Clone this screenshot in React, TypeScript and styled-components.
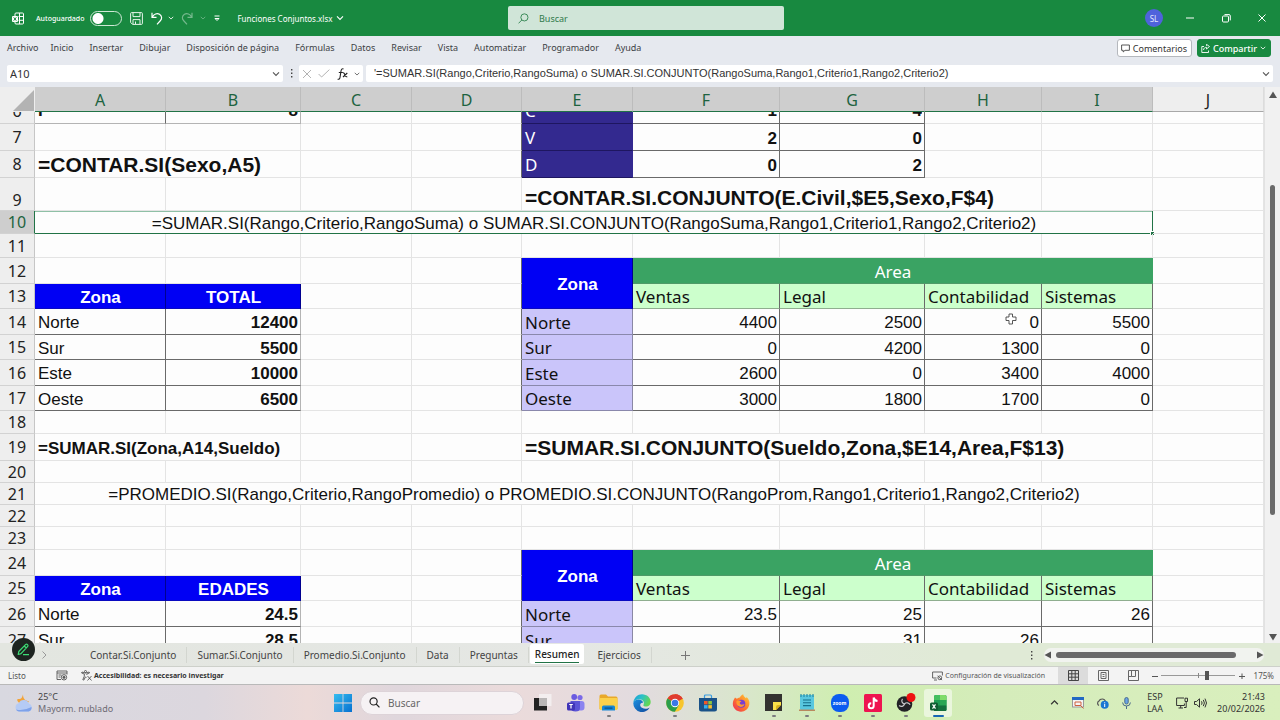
import React from "react";
import styled, { createGlobalStyle, css } from "styled-components";

const UI = `"Noto Sans", "Open Sans", sans-serif`;
const ARIAL = `"Liberation Sans", Arial, sans-serif`;

const Global = createGlobalStyle`
  * { box-sizing: border-box; }
  body { margin: 0; font-family: ${UI}; color: #222; }
  button, input { font: inherit; color: inherit; border: 0; background: none; padding: 0; margin: 0; }
  svg { display: block; flex: none; }
`;

const Window = styled.div`
  display: flex;
  flex-direction: column;
  height: 100vh;
  overflow: hidden;
  background: #e6e9ef;
`;

/* ---------- title bar ---------- */

const TitleBar = styled.header`
  display: grid;
  grid-template-columns: 1fr minmax(160px, 276px) 1fr;
  align-items: center;
  height: 36px;
  padding-left: 12px;
  flex: none;
  background: #188940;
  color: #fff;
  font-size: 8px;
`;

const TitleGroup = styled.div`
  display: flex;
  align-items: center;
  white-space: nowrap;
`;

const AutoSave = styled.label`
  display: flex;
  align-items: center;
  gap: 6px;
  margin: 0 8px 0 12px;
  font-size: 7px;
  font-weight: 500;
`;

const Toggle = styled.input`
  appearance: none;
  width: 32px;
  height: 15px;
  border: 1px solid #cfe8d6;
  border-radius: 8px;
  background: radial-gradient(circle at 7px 50%, #fff 5px, transparent 6px);
`;

const BarButton = styled.button<{ $w: number; $dim?: boolean }>`
  display: flex;
  align-items: center;
  justify-content: center;
  width: ${(p) => p.$w}px;
  height: 24px;
  opacity: ${(p) => (p.$dim ? 0.4 : 1)};
`;

const FileName = styled.button`
  display: flex;
  align-items: center;
  gap: 4px;
  margin-left: 6px;
`;

const TitleSearch = styled.label`
  display: flex;
  align-items: center;
  gap: 10px;
  height: 24px;
  padding: 0 10px;
  border-radius: 2px;
  background: #d0e5d8;
  color: #1f7a41;
`;

const SearchInput = styled.input<{ $size: number; $tint: string }>`
  flex: 1;
  min-width: 0;
  font-size: ${(p) => p.$size}px;
  outline: none;
  &::placeholder { color: ${(p) => p.$tint}; opacity: 1; }
`;

const WindowControls = styled(TitleGroup)`
  justify-content: flex-end;
`;

const Avatar = styled.button`
  width: 18px;
  height: 18px;
  margin-right: 9px;
  border-radius: 50%;
  background: #4f62dc;
  color: #e4e8ff;
  font-size: 8px;
`;

/* ---------- ribbon tabs ---------- */

const Ribbon = styled.nav`
  display: flex;
  align-items: center;
  justify-content: space-between;
  flex: none;
  height: 24px;
  padding: 0 9px 0 7px;
  margin-bottom: 4px;
`;

const RibbonTabs = styled.div`
  display: flex;
  gap: 16px;
`;

const RibbonTab = styled.button<{ $first?: boolean }>`
  font-size: 9px;
  line-height: 14px;
  color: #3c3f44;
  white-space: nowrap;
  margin-right: ${(p) => (p.$first ? "-4px" : "0")};
`;

const RibbonActions = styled.div`
  display: flex;
  gap: 5px;
`;

const ActionButton = styled.button<{ $primary?: boolean }>`
  display: flex;
  align-items: center;
  gap: 3px;
  height: 18px;
  padding: 0 4px 0 3px;
  border-radius: 3px;
  border: 1px solid ${(p) => (p.$primary ? "#188940" : "#b5b8bd")};
  background: ${(p) => (p.$primary ? "#188940" : "#fff")};
  color: ${(p) => (p.$primary ? "#fff" : "#333")};
  font-size: 9px;
  font-weight: ${(p) => (p.$primary ? 500 : 400)};
`;

/* ---------- formula bar ---------- */

const FormulaBar = styled.div`
  display: flex;
  align-items: center;
  flex: none;
  height: 23px;
  padding: 0 7px 4px;
  gap: 3px;
`;

const Box = styled.div<{ $w?: string }>`
  display: flex;
  align-items: center;
  justify-content: space-between;
  height: 17px;
  width: ${(p) => p.$w ?? "auto"};
  flex: ${(p) => (p.$w ? "none" : "1")};
  padding: 0 3px;
  background: #fff;
  border-radius: 2px;
  color: #555;
`;

const NameInput = styled.input`
  width: 100px;
  font-size: 11px;
  line-height: 15px;
  color: #333;
`;

const FormulaInput = styled.input`
  flex: 1;
  padding-left: 5px;
  font-family: ${ARIAL};
  font-size: 11px;
  line-height: 15px;
  color: #333;
`;

const Dots = styled.div<{ $after?: number }>`
  display: flex;
  justify-content: center;
  width: 10px;
  margin-right: ${(p) => p.$after ?? 0}px;
`;

/* ---------- sheet ---------- */

const SheetArea = styled.main`
  display: flex;
  flex: 1;
  min-height: 0;
  background: #fdfdfd;
`;

const Viewport = styled.div`
  flex: 1;
  min-width: 0;
  overflow: hidden;
`;

const Grid = styled.table`
  width: 100%;
  table-layout: fixed;
  border-collapse: separate;
  border-spacing: 0;
  font-size: 17px;
  line-height: 19px;
`;

const Col = styled.col<{ $w?: number }>`
  width: ${(p) => (p.$w ? `${p.$w}px` : "auto")};
`;

const ColumnHead = styled.th<{ $on: boolean }>`
  height: 25px;
  padding: 3px 0 0;
  font-size: 16px;
  font-weight: 400;
  background: ${(p) => (p.$on ? "#cecece" : "#eeeeee")};
  color: ${(p) => (p.$on ? "#1d6340" : "#222")};
  border-right: 1px solid ${(p) => (p.$on ? "#bcbcbc" : "#dcdcdc")};
  border-bottom: 1px solid ${(p) => (p.$on ? "#217346" : "#a8a8a8")};
`;

const Corner = styled.td`
  padding: 0 1px 1px 0;
  background: #eeeeee;
  vertical-align: bottom;
  svg { margin-left: auto; }
`;

const RowHead = styled.th<{ $on?: boolean; $low?: boolean; $cut?: boolean }>`
  padding: ${(p) => (p.$cut ? 0 : 1)}px 0 0;
  font-size: 16px;
  font-weight: 400;
  vertical-align: ${(p) => (p.$low ? "bottom" : "middle")};
  background: ${(p) => (p.$on ? "#cecece" : "#eeeeee")};
  color: ${(p) => (p.$on ? "#1d6340" : "#222")};
  border-right: 1px solid ${(p) => (p.$on ? "#217346" : "#c6c6c6")};
  border-bottom: 1px solid #d2d2d2;
`;

type Look = {
  bg?: string;
  fg?: string;
  align?: "left" | "center" | "right";
  bold?: boolean;
  ui?: boolean;
  big?: boolean;
  right?: string;
  bottom?: string;
  picked?: boolean;
};

const Cell = styled.td<{ $look: Look; $low?: boolean; $cut?: boolean }>`
  position: relative;
  padding: ${(p) => (p.$cut ? 0 : p.$look.ui ? 1 : 2)}px 2px 0 3px;
  white-space: nowrap;
  vertical-align: ${(p) => (p.$low ? "bottom" : "middle")};
  text-align: ${(p) => p.$look.align ?? "left"};
  font-family: ${(p) => (p.$look.ui ? UI : ARIAL)};
  font-weight: ${(p) => (p.$look.bold ? 700 : 400)};
  background: ${(p) => p.$look.bg ?? "transparent"};
  color: ${(p) => p.$look.fg ?? "#111"};
  border-right: 1px solid ${(p) => p.$look.right ?? "#e4e4e4"};
  border-bottom: 1px solid ${(p) => p.$look.bottom ?? "#e4e4e4"};
  ${(p) => p.$look.big && css`font-size: 21px; line-height: 24px;`}
  ${(p) => p.$look.picked && css`box-shadow: inset 0 1px #8fc0a6;`}
`;

const Row = styled.tr<{ $h: number }>`
  height: ${(p) => p.$h}px;
`;

const Clipped = styled.div`
  display: flex;
  flex-direction: column;
  justify-content: flex-end;
  height: 11px;
  overflow: hidden;
  line-height: 24px;
`;

const FillHandle = styled.span`
  position: absolute;
  right: -2px;
  bottom: -2px;
  width: 4px;
  height: 4px;
  background: #217346;
  border: 1px solid #fff;
  border-width: 1px 0 0 1px;
`;

const Pointer = styled.span`
  position: absolute;
  right: 24px;
  top: 4px;
`;

type CellData = { t?: string; span?: number; rows?: number; look: Look; pointer?: boolean };
type RowData = { n: number; h: number; low?: boolean; cut?: boolean; cells: CellData[] };

const INK = "#6a6a6a";
const SOFT = "#b4b4b4";

const blank = (n: number): CellData[] => Array.from({ length: n }, () => ({ look: {} }));
const beside: CellData = { look: { right: INK } };
const blueHead = (t: string, rows?: number): CellData => ({
  t, rows, look: { bg: "#0000f4", fg: "#fff", align: "center", bold: true, right: "#000090", bottom: "#0a0ac0" },
});
const areaHead: CellData = {
  t: "Area", span: 4, look: { bg: "#3aa363", fg: "#fff", align: "center", ui: true, right: "#3aa363", bottom: "#4f9a68" },
};
const mint = (t: string): CellData => ({ t, look: { bg: "#ccffcc", ui: true, right: INK, bottom: "#8fae8f" } });
const lilac = (t: string): CellData => ({ t, look: { bg: "#cac5fa", ui: true, right: "#8a88a4", bottom: "#8a88ac" } });
const indigo = (t: string): CellData => ({ t, look: { bg: "#33298f", fg: "#fff", ui: true, right: "#33298f", bottom: "#1e1660" } });
const num = (t: string, bold = false): CellData => ({ t, look: { align: "right", bold, right: INK, bottom: INK } });
const leftPair = (a: string, b: string): CellData[] => [
  { t: a, look: { right: INK, bottom: INK } },
  { t: b, look: { align: "right", bold: true, right: SOFT, bottom: INK } },
];
const record = (n: number, h: number, zone: string, total: string, vals: string[], pointerAt = -1): RowData => ({
  n, h,
  cells: [
    ...leftPair(zone, total), ...blank(1), beside, lilac(zone),
    ...vals.map((v, i) => ({ ...num(v), pointer: i === pointerAt })),
    ...blank(1),
  ],
});
const areas = ["Ventas", "Legal", "Contabilidad", "Sistemas"];

const rows: RowData[] = [
  {
    n: 6, h: 12, cut: true,
    cells: [
      { t: "F", look: { bold: true, right: INK, bottom: SOFT } },
      { t: "8", look: { bold: true, align: "right", right: SOFT, bottom: SOFT } },
      ...blank(1), beside, indigo("C"), num("1", true), num("4", true), ...blank(3),
    ],
  },
  { n: 7, h: 27, cells: [...blank(3), beside, indigo("V"), num("2", true), num("0", true), ...blank(3)] },
  {
    n: 8, h: 27,
    cells: [
      { t: "=CONTAR.SI(Sexo,A5)", span: 2, look: { bold: true, big: true } },
      ...blank(1), beside, indigo("D"), num("0", true), num("2", true), ...blank(3),
    ],
  },
  {
    n: 9, h: 33, low: true,
    cells: [
      ...blank(4),
      { t: "=CONTAR.SI.CONJUNTO(E.Civil,$E5,Sexo,F$4)", span: 4, look: { bold: true, big: true } },
      ...blank(2),
    ],
  },
  {
    n: 10, h: 23,
    cells: [
      {
        t: "=SUMAR.SI(Rango,Criterio,RangoSuma) o SUMAR.SI.CONJUNTO(RangoSuma,Rango1,Criterio1,Rango2,Criterio2)",
        span: 9, look: { align: "center", right: "#217346", bottom: "#217346", picked: true },
      },
      ...blank(1),
    ],
  },
  { n: 11, h: 24, cells: blank(10) },
  { n: 12, h: 26, cells: [...blank(3), beside, blueHead("Zona", 2), areaHead, ...blank(1)] },
  { n: 13, h: 25, cells: [blueHead("Zona"), blueHead("TOTAL"), ...blank(1), beside, ...areas.map(mint), ...blank(1)] },
  record(14, 26, "Norte", "12400", ["4400", "2500", "0", "5500"], 2),
  record(15, 25, "Sur", "5500", ["0", "4200", "1300", "0"]),
  record(16, 26, "Este", "10000", ["2600", "0", "3400", "4000"]),
  record(17, 25, "Oeste", "6500", ["3000", "1800", "1700", "0"]),
  { n: 18, h: 23, cells: blank(10) },
  {
    n: 19, h: 27,
    cells: [
      { t: "=SUMAR.SI(Zona,A14,Sueldo)", span: 2, look: { bold: true } },
      ...blank(2),
      { t: "=SUMAR.SI.CONJUNTO(Sueldo,Zona,$E14,Area,F$13)", span: 5, look: { bold: true, big: true } },
      ...blank(1),
    ],
  },
  { n: 20, h: 22, cells: blank(10) },
  {
    n: 21, h: 22,
    cells: [
      {
        t: "=PROMEDIO.SI(Rango,Criterio,RangoPromedio) o PROMEDIO.SI.CONJUNTO(RangoProm,Rango1,Criterio1,Rango2,Criterio2)",
        span: 9, look: { align: "center" },
      },
      ...blank(1),
    ],
  },
  { n: 22, h: 22, cells: blank(10) },
  { n: 23, h: 23, cells: blank(10) },
  { n: 24, h: 26, cells: [...blank(3), beside, blueHead("Zona", 2), areaHead, ...blank(1)] },
  { n: 25, h: 25, cells: [blueHead("Zona"), blueHead("EDADES"), ...blank(1), beside, ...areas.map(mint), ...blank(1)] },
  record(26, 26, "Norte", "24.5", ["23.5", "25", "", "26"]),
  record(27, 26, "Sur", "28.5", ["", "31", "26", ""]),
];

const columns: { name: string; w?: number }[] = [
  { name: "A", w: 131 }, { name: "B", w: 135 }, { name: "C", w: 111 }, { name: "D", w: 110 }, { name: "E", w: 111 },
  { name: "F", w: 147 }, { name: "G", w: 145 }, { name: "H", w: 117 }, { name: "I", w: 111 }, { name: "J" },
];

/* ---------- scroll bars ---------- */

const VScroll = styled.div`
  display: flex;
  flex-direction: column;
  align-items: center;
  width: 16px;
  padding: 4px 0 2px;
  background: #f1f1f1;
  border-left: 1px solid #e2e2e2;
`;

const HScroll = styled.div`
  display: flex;
  align-items: center;
  width: 220px;
  height: 14px;
  margin-right: 16px;
  border-radius: 7px;
  background: #f1f3ef;
`;

const Gap = styled.div<{ $n: number }>`
  flex: ${(p) => p.$n};
`;

const Thumb = styled.div<{ $n: number; $vertical?: boolean }>`
  flex: ${(p) => p.$n};
  border-radius: 3px;
  background: #6a6a6a;
  ${(p) => (p.$vertical ? css`width: 5px;` : css`height: 6px;`)}
`;

/* ---------- sheet tabs ---------- */

const TabBar = styled.nav`
  position: relative;
  display: flex;
  align-items: center;
  flex: none;
  height: 24px;
  padding: 1px 0 0 80px;
  background: linear-gradient(90deg, #e3e6e0, #e5e7e4 45%, #e0ead6 75%);
  border-bottom: 1px solid #cdd0ca;
`;

const SheetTab = styled.button<{ $on?: boolean }>`
  height: ${(p) => (p.$on ? 20 : 16)}px;
  font-size: 10px;
  line-height: 16px;
  white-space: nowrap;
  ${(p) =>
    p.$on
      ? css`align-self: flex-start; margin: 0 3px 0 1px; padding: 0 5px; border-radius: 2px; background: #fff; font-weight: 500;`
      : css`padding: 0 10px; color: #444; border-right: 1px solid #d3d6d0;`}
`;

const TabLabel = styled.span<{ $on?: boolean }>`
  display: block;
  border-bottom: ${(p) => (p.$on ? "1px solid #217346" : "0")};
`;

const NextSheets = styled.button`
  position: absolute;
  left: 41px;
  top: 8px;
`;

const PenBadge = styled.button`
  position: absolute;
  left: 12px;
  top: -5px;
  display: grid;
  place-items: center;
  width: 23px;
  height: 23px;
  border-radius: 50%;
  background: #1d2420;
`;

const AddSheet = styled.button`
  padding: 0 29px;
`;

const Spacer = styled.div`
  flex: 1;
`;

/* ---------- status bar ---------- */

const StatusBar = styled.footer`
  display: flex;
  align-items: center;
  flex: none;
  height: 18px;
  padding: 0 6px 0 8px;
  background: #f3f3f3;
  border-bottom: 1px solid #b9b9b9;
  font-size: 7px;
  color: #555;
  white-space: nowrap;
`;

const Listo = styled.span`
  width: 48px;
  font-size: 8px;
`;

const StatusButton = styled.button<{ $strong?: boolean }>`
  display: flex;
  align-items: center;
  gap: 2px;
  margin-right: 13px;
  font-weight: ${(p) => (p.$strong ? 700 : 400)};
  color: ${(p) => (p.$strong ? "#333" : "#555")};
`;

const ViewButton = styled.button<{ $on?: boolean }>`
  display: grid;
  place-items: center;
  width: 30px;
  height: 17px;
  background: ${(p) => (p.$on ? "#dcdcdc" : "transparent")};
`;

const ZoomButton = styled.button`
  display: grid;
  place-items: center;
  width: 13px;
  height: 16px;
`;

const ZoomRange = styled.input`
  appearance: none;
  width: 74px;
  height: 9px;
  margin: 0;
  background:
    linear-gradient(#888, #888) center / 1px 5px no-repeat,
    linear-gradient(#999, #999) center / 100% 1px no-repeat;
  &::-webkit-slider-thumb {
    appearance: none;
    width: 4px;
    height: 9px;
    background: #555;
  }
`;

const ZoomText = styled.button`
  width: 26px;
  text-align: right;
  font-size: 8px;
`;

/* ---------- task bar ---------- */

const TaskBar = styled.footer`
  display: grid;
  grid-template-columns: 1fr auto 1fr;
  align-items: center;
  flex: none;
  height: 35px;
  background: linear-gradient(90deg, #d8d8e0 0, #dcd7de 16%, #ecdad8 24%, #dfd6dc 31%, #ebdbdb 40%, #e2dbdf 50%, #d9e6cc 58%, #cfeeb0 66%, #d5ecbb 78%, #d9efbd 100%);
  font-size: 9px;
  line-height: 12px;
`;

const Weather = styled.button`
  display: flex;
  align-items: center;
  gap: 5px;
  padding-left: 14px;
  text-align: left;
  color: #444;
`;

const Faded = styled.span`
  display: block;
  color: #6d6b74;
`;

const Apps = styled.div`
  display: flex;
  align-items: center;
`;

const AppButton = styled.button<{ $open?: boolean; $active?: boolean }>`
  position: relative;
  display: grid;
  place-items: center;
  width: 33px;
  height: 35px;
  ${(p) =>
    p.$active &&
    css`
      width: 28px;
      height: 28px;
      margin: 0 2px;
      border-radius: 3px;
      background: #eaf6dd;
    `}
  ${(p) =>
    (p.$open || p.$active) &&
    css`
      &::after {
        content: "";
        position: absolute;
        bottom: ${p.$active ? "0" : "3px"};
        width: ${p.$active ? "11px" : "4px"};
        height: 2px;
        border-radius: 1px;
        background: ${p.$active ? "#1666b4" : "#7c7c80"};
      }
    `}
`;

const TaskSearch = styled.label`
  display: flex;
  align-items: center;
  gap: 8px;
  width: 164px;
  height: 24px;
  margin: 0 2px 0 1px;
  padding: 0 8px;
  border-radius: 12px;
  background: #f6f2f4;
  border: 1px solid #ddd3d8;
`;

const Tray = styled.div`
  display: flex;
  align-items: center;
  justify-content: flex-end;
  padding-right: 15px;
  color: #333;
`;

const TrayButton = styled.button<{ $w?: number }>`
  display: grid;
  place-items: center;
  width: ${(p) => p.$w ?? 24}px;
  height: 30px;
`;

const Clock = styled.button`
  width: 57px;
  text-align: right;
`;

/* ---------- icons ---------- */

const Chevron = ({ w = 8, up = false }: { w?: number; up?: boolean }) => (
  <svg width={w} height={w} viewBox="0 0 8 8" fill="none" stroke="currentColor" strokeWidth="1.1">
    <path d={up ? "M1 5.6 4 2.6l3 3" : "M1 2.4l3 3 3-3"} />
  </svg>
);

const Triangle = ({ d }: { d: string }) => (
  <svg width="8" height="8" viewBox="0 0 8 8" fill="#555"><path d={d} /></svg>
);

const ExcelMark = () => (
  <svg width="12" height="13" viewBox="0 0 12 13" fill="none" stroke="#fff" strokeWidth="1">
    <path d="M3 4V2q0-1 1-1h6.500q1 0 1 1v9q0 1-1 1H4q-1 0-1-1V9.500M7.500 1v11M6.500 4.500h5M6.500 8.300h5" />
    <rect x="0" y="4" width="6" height="6" rx="1" fill="#fff" stroke="none" />
    <path d="M1.700 5.300l2.600 3.400M4.300 5.300L1.700 8.700" stroke="#188940" />
  </svg>
);

const SaveIcon = () => (
  <svg width="13" height="13" viewBox="0 0 13 13" fill="none" stroke="#e6f4ea" strokeWidth="1">
    <path d="M.6 1.600q0-1 1-1h9.800q1 0 1 1v9.800q0 1-1 1H2.600l-2-2zM3 .6v4h7v-4M3 12.400V7.600h7v4.800M5.500 9.500v2.500" />
  </svg>
);

const UndoIcon = ({ flip = false }: { flip?: boolean }) => (
  <svg width="12" height="13" viewBox="0 0 12 13" fill="none" stroke="#fff" strokeWidth="1.200">
    <g transform={flip ? "matrix(-1 0 0 1 12 0)" : undefined}>
      <path d="M1 .8v4.500h4.500M1.200 5.200C3 2 6 .8 8.500 2.300c2.500 1.600 2.700 4.300 1 6.200L6 12.400" />
    </g>
  </svg>
);

const Magnifier = ({ size, mirrored = false }: { size: number; mirrored?: boolean }) => (
  <svg width={size} height={size} viewBox="0 0 12 12" fill="none" stroke="currentColor" strokeWidth={mirrored ? 0.9 : 1.3}>
    <g transform={mirrored ? "matrix(-1 0 0 1 12 0)" : undefined}>
      <circle cx="5" cy="4.800" r="3.900" />
      <path d="M7.800 7.600l3.600 3.700" />
    </g>
  </svg>
);

const PenIcon = () => (
  <svg width="13" height="13" viewBox="0 0 13 13" fill="none" stroke="#3ddc74" strokeWidth="1.200" strokeLinejoin="round">
    <path d="M1.200 11.500l.6-3L8.500 1.600q1-.9 2 0t0 2L4 10.700zM7.300 3l2 2M6 11.600h6" />
  </svg>
);

const MacroIcon = () => (
  <svg width="12" height="11" viewBox="0 0 12 11" fill="none" stroke="#555" strokeWidth=".9">
    <path d="M5 9.500H1V1h10v3.500M1 3h10M2.500 5h3M2.500 7h2" />
    <circle cx="8" cy="7.300" r="2.700" /><circle cx="8" cy="7.300" r="1.100" fill="#555" />
  </svg>
);

const AccessIcon = () => (
  <svg width="11" height="11" viewBox="0 0 11 11" fill="none" stroke="#444" strokeWidth=".8" strokeLinejoin="round">
    <circle cx="4.500" cy="1.600" r="1.100" />
    <path d="M5.800 4.800V4l2.700-1-.4-1L5.500 2.900h-2L1 2l-.4 1 2.700 1v2.200L1.800 9.700l1 .4 1.700-3.300.8.900M6.500 6l4 4.500M10.500 6l-4 4.500" />
  </svg>
);

const DisplayIcon = () => (
  <svg width="11" height="10" viewBox="0 0 11 10" fill="none" stroke="#555" strokeWidth=".9">
    <path d="M4.500 7H.6V1h9.800v3.500M2 9h3" />
    <circle cx="7.800" cy="6.800" r="1.900" /><path d="M5.600 4.700l4.400 4.400" />
  </svg>
);

const WeatherIcon = () => (
  <svg width="19" height="18" viewBox="0 0 19 18">
    <path d="M9 .5c0 4 2 6 6 7-2 3-6 4-9 2S2 4.500 5 5c2 .3 3-1 4-4.500z" fill="#f2a43a" />
    <path d="M5 17.500a4.200 4.200 0 0 1-.3-8.200A5.500 5.500 0 0 1 15 9.800a4 4 0 0 1-.3 7.700z" fill="#b5cbf5" />
    <path d="M2 15.500q7 2 15.500-2.500a4 4 0 0 1-2.800 4.500H5q-2 0-3-2z" fill="#7ea2ea" />
  </svg>
);

const WindowsIcon = () => (
  <svg width="18" height="18" viewBox="0 0 18 18">
    <defs><linearGradient id="win" x1="0" y1="0" x2="18" y2="18" gradientUnits="userSpaceOnUse"><stop stopColor="#35bdf0" /><stop offset="1" stopColor="#0670d0" /></linearGradient></defs>
    <path d="M0 0h8.600v8.600H0zM9.400 0H18v8.600H9.400zM0 9.400h8.600V18H0zM9.400 9.400H18V18H9.400z" fill="url(#win)" />
  </svg>
);

const TaskViewIcon = () => (
  <svg width="18" height="17" viewBox="0 0 18 17">
    <rect x="0" y="4" width="13" height="12.500" fill="#222" />
    <rect x="5" y="0" width="12.500" height="12" fill="#f3f0f0" fillOpacity=".92" />
    <rect x="5" y="4" width="8" height="8" fill="#b9b6b6" />
  </svg>
);

const TeamsIcon = () => (
  <svg width="18" height="18" viewBox="0 0 18 18">
    <circle cx="13" cy="3.500" r="2.600" fill="#7b6ae8" /><circle cx="7.200" cy="3" r="2.900" fill="#6a5be0" />
    <rect x="9" y="7" width="8.500" height="9.500" rx="3" fill="#8b83f0" />
    <path d="M3.500 7H13v7q0 3.500-4.500 3.500t-5-3.500z" fill="#5b54d6" />
    <rect x="0" y="8.500" width="8" height="8" rx="1.500" fill="#4034b8" />
    <path d="M2.200 10.500h3.600M4 10.500v4" stroke="#fff" strokeWidth="1.200" />
  </svg>
);

const ExplorerIcon = () => (
  <svg width="19" height="17" viewBox="0 0 19 17">
    <path d="M.5 2q0-1.500 1.500-1.500h5L9 2.500h8q1.500 0 1.500 1.500v11H.5z" fill="#e9a92a" />
    <rect x=".5" y="4" width="18" height="12" rx="1" fill="#fbd14b" />
    <path d="M3 16.500v-3.500q0-1.500 1.500-1.500h10q1.500 0 1.500 1.500v3.500z" fill="#1787d4" />
    <rect x="5.500" y="13.500" width="8" height="1.200" fill="#0b4f8c" />
  </svg>
);

const EdgeIcon = () => (
  <svg width="18" height="18" viewBox="0 0 18 18">
    <defs>
      <linearGradient id="edgeTop" x1="0" y1="0" x2="1" y2=".4"><stop stopColor="#1a9bdc" /><stop offset=".5" stopColor="#2cc0c8" /><stop offset="1" stopColor="#62d755" /></linearGradient>
      <linearGradient id="edgeLow" x1="0" y1="0" x2="1" y2="1"><stop stopColor="#1c8fe0" /><stop offset="1" stopColor="#124a9c" /></linearGradient>
    </defs>
    <path d="M.3 9C.8 6.500 4 5 7 5.800c2 .5 3 1.800 3 3-3-.5-4 3-1 5 2.500 1.600 5.500 1.200 7.800-.3A8.800 8.800 0 0 1 .3 9z" fill="url(#edgeLow)" />
    <path d="M.3 8.500C1 3.500 4.700.2 9 .2c5 0 8.700 3.600 8.700 7.800 0 2.900-2 4.500-4.300 4.500-1.800 0-3.400-.6-3-1.600 1.600-2.200-.2-5.700-4.100-5.700C3.500 5.200 1 6.500.3 8.500z" fill="url(#edgeTop)" />
  </svg>
);

const ChromeIcon = () => (
  <svg width="18" height="18" viewBox="0 0 18 18">
    <circle cx="9" cy="9" r="8.800" fill="#f7c52c" />
    <path d="M9 9L1.400 4.600A8.800 8.800 0 0 1 16.700 4.700z" fill="#e03c31" />
    <path d="M9 .2a8.800 8.800 0 0 1 7.700 4.500H9z" fill="#e03c31" />
    <path d="M9 9L1.400 4.600A8.800 8.800 0 0 0 8.800 17.800l4-6.600z" fill="#2b9e4b" />
    <circle cx="9" cy="9" r="4.200" fill="#fff" /><circle cx="9" cy="9" r="3.300" fill="#3b78e7" />
  </svg>
);

const StoreIcon = () => (
  <svg width="18" height="18" viewBox="0 0 18 18">
    <path d="M5.500 4V2q0-1 1-1h5q1 0 1 1v2" fill="none" stroke="#3a9de0" strokeWidth="1.200" />
    <path d="M0 4h18v11q0 2.500-2.500 2.500h-13Q0 17.500 0 15z" fill="#1a5288" />
    <path d="M5 7h3.600v3.400H5z" fill="#f05a2a" /><path d="M9.300 7h3.600v3.400H9.300z" fill="#8cc63f" />
    <path d="M5 11.100h3.600v3.400H5z" fill="#35b0ee" /><path d="M9.300 11.100h3.600v3.400H9.300z" fill="#fbc02d" />
  </svg>
);

const FirefoxIcon = () => (
  <svg width="18" height="18" viewBox="0 0 18 18">
    <defs><linearGradient id="fox" x1="1" y1="0" x2="0" y2="1"><stop stopColor="#ffd43a" /><stop offset=".5" stopColor="#ff7a2a" /><stop offset="1" stopColor="#ee2a5a" /></linearGradient></defs>
    <path d="M3 3.500l1.800 1.300C6 3.800 7.500 3.500 8 3.500 8.500 1.800 10 .8 11.200.3c0 1.600 1.200 2.500 2.800 4 .5-.3.500-1 .3-1.600C17 5 17.800 7.500 17.300 10.500 16.500 15 13 17.700 9 17.700S.8 14.500.8 9.800C.8 7 2 5.500 3 3.500z" fill="url(#fox)" />
    <circle cx="9.300" cy="9.800" r="4" fill="#7a3fd0" />
    <path d="M4.500 7c2-.8 4-.3 5 .8-2.500.2-2 2.500-.3 2.800 1.700.3 2.300-.8 3.300-.2-.8 2-3 3-5.200 2.200S4 9.500 4.500 7z" fill="#ff9a2e" />
  </svg>
);

const StickyIcon = () => (
  <svg width="17" height="17" viewBox="0 0 17 17">
    <path d="M0 0h17v17H0z" fill="#333230" />
    <path d="M8 8h8v3l-5 5H8z" fill="#fbe04a" /><path d="M16 11l-5 5v-3q0-2 2-2z" fill="#d9b21c" />
  </svg>
);

const NotepadIcon = () => (
  <svg width="16" height="19" viewBox="0 0 16 19">
    <rect x="1" y="2" width="14" height="15" rx="1" fill="#59c7df" />
    <path d="M2 1v3M5 1v3M8 1v3M11 1v3M14 1v3" stroke="#2b8da6" strokeWidth="1.200" />
    <path d="M4 7h8M4 9.800h8M4 12.600h8" stroke="#17708c" strokeWidth="1.100" />
    <path d="M0 16.500h16V18H0z" fill="#b98a5e" />
  </svg>
);

const ZoomAppMark = styled.span`
  display: grid;
  place-items: center;
  width: 18px;
  height: 18px;
  border-radius: 8px;
  background: #0b5cf0;
  color: #fff;
  font-size: 5px;
  font-weight: 700;
`;

const TikTokIcon = () => (
  <svg width="18" height="18" viewBox="0 0 18 18" fill="none">
    <rect width="18" height="18" rx="1.500" fill="#ee1450" />
    <path d="M9.700 3.500v8.200a2.500 2.500 0 1 1-2.500-2.500M9.700 3.500c.3 2 1.800 3.300 3.800 3.500" stroke="#fff" strokeWidth="2" />
  </svg>
);

const ObsIcon = () => (
  <svg width="20" height="20" viewBox="0 0 20 20">
    <circle cx="8.500" cy="11" r="7.800" fill="#222226" />
    <g fill="none" stroke="#c9c9cc" strokeWidth="1.200">
      <path d="M8.500 11c-2.500-.5-3.500-3-2-5.200M8.500 11c1.700-1.900 4.400-1.600 5.600.8M8.500 11c-.8 2.500-3.400 3.200-5.400 1.500" />
    </g>
    <circle cx="15" cy="4.500" r="4.500" fill="#ee1111" />
  </svg>
);

const ExcelApp = () => (
  <svg width="17" height="18" viewBox="0 0 17 18">
    <rect x="4" y="1" width="12.500" height="16" rx="1.500" fill="#1f9d55" />
    <path d="M10 1h5q1.500 0 1.500 1.500V6H10z" fill="#7fdc6a" /><path d="M4 2.500Q4 1 5.500 1H10v5H4z" fill="#43bf5e" />
    <path d="M10 6h6.500v5.500H10z" fill="#2aa653" /><path d="M4 11.500h12.500v4q0 1.500-1.500 1.500H4z" fill="#14703c" />
    <rect x="0" y="8.500" width="8" height="8" rx="1.500" fill="#0f5c32" />
    <path d="M2.500 10.300l3 4.400M5.500 10.300l-3 4.400" stroke="#fff" strokeWidth="1.200" />
  </svg>
);

const line = { fill: "none", stroke: "currentColor", strokeWidth: 1 } as const;

const apps: { name: string; icon: React.ReactNode; open?: boolean; active?: boolean }[] = [
  { name: "Vista de tareas", icon: <TaskViewIcon /> },
  { name: "Teams", icon: <TeamsIcon /> },
  { name: "Explorador", icon: <ExplorerIcon />, open: true },
  { name: "Edge", icon: <EdgeIcon /> },
  { name: "Chrome", icon: <ChromeIcon />, open: true },
  { name: "Store", icon: <StoreIcon /> },
  { name: "Firefox", icon: <FirefoxIcon /> },
  { name: "Notas", icon: <StickyIcon />, open: true },
  { name: "Bloc de notas", icon: <NotepadIcon />, open: true },
  { name: "Zoom", icon: <ZoomAppMark>zoom</ZoomAppMark>, open: true },
  { name: "TikTok", icon: <TikTokIcon />, open: true },
  { name: "OBS", icon: <ObsIcon />, open: true },
  { name: "Excel", icon: <ExcelApp />, active: true },
];

const menu = ["Archivo", "Inicio", "Insertar", "Dibujar", "Disposición de página", "Fórmulas", "Datos", "Revisar", "Vista", "Automatizar", "Programador", "Ayuda"];
const sheets = ["Contar.Si.Conjunto", "Sumar.Si.Conjunto", "Promedio.Si.Conjunto", "Data", "Preguntas", "Resumen", "Ejercicios"];

const CrossCursor = () => (
  <svg width="12" height="12" viewBox="0 0 12 12" fill="#fff" stroke="#444" strokeWidth=".9">
    <path d="M4 1h3.500v3H11v3.500H7.500V11H4V7.500H1V4h3z" />
  </svg>
);

const MoreDots = ({ after }: { after?: number }) => (
  <Dots $after={after}>
    <svg width="3" height="9" viewBox="0 0 3 9" fill="#444"><path d="M1 0h1.400v1.500H1zM1 3.500h1.400V5H1zM1 7h1.400v1.500H1z" /></svg>
  </Dots>
);

function Sheet() {
  return (
    <Viewport>
      <Grid>
        <colgroup>
          <Col $w={35} />
          {columns.map((c) => <Col key={c.name} $w={c.w} />)}
        </colgroup>
        <thead>
          <tr>
            <Corner>
              <svg width="21" height="21" viewBox="0 0 21 21"><path d="M21 0v21H0z" fill="#b3b3b3" /></svg>
            </Corner>
            {columns.map((c) => <ColumnHead key={c.name} $on={c.name !== "J"}>{c.name}</ColumnHead>)}
          </tr>
        </thead>
        <tbody>
          {rows.map((r) => (
            <Row key={r.n} $h={r.h}>
              <RowHead $on={r.n === 10} $low={r.low} $cut={r.cut}>{r.cut ? <Clipped>{r.n}</Clipped> : r.n}</RowHead>
              {r.cells.map((c, i) => (
                <Cell key={i} colSpan={c.span} rowSpan={c.rows} $look={c.look} $low={r.low} $cut={r.cut}>
                  {r.cut ? <Clipped>{c.t}</Clipped> : c.t}
                  {c.look.picked && <FillHandle />}
                  {c.pointer && <Pointer><CrossCursor /></Pointer>}
                </Cell>
              ))}
            </Row>
          ))}
        </tbody>
      </Grid>
    </Viewport>
  );
}

export default function App() {
  return (
    <>
      <Global />
      <Window>
        <TitleBar>
          <TitleGroup>
            <ExcelMark />
            <AutoSave>Autoguardado<Toggle type="checkbox" role="switch" /></AutoSave>
            <BarButton $w={13} aria-label="Guardar"><SaveIcon /></BarButton>
            <BarButton $w={28} aria-label="Deshacer"><UndoIcon /></BarButton>
            <BarButton $w={0} aria-label="Historial de deshacer"><Chevron w={6} /></BarButton>
            <BarButton $w={32} $dim aria-label="Rehacer"><UndoIcon flip /></BarButton>
            <BarButton $w={0} $dim aria-label="Historial de rehacer"><Chevron w={6} /></BarButton>
            <BarButton $w={28} aria-label="Personalizar">
              <svg width="8" height="8" viewBox="0 0 8 8" fill="none" stroke="#fff"><path d="M1.500 2h5M2 4.500l2 2 2-2z" /></svg>
            </BarButton>
            <FileName>Funciones Conjuntos.xlsx<Chevron /></FileName>
          </TitleGroup>
          <TitleSearch>
            <Magnifier size={11} mirrored />
            <SearchInput $size={9} $tint="#2f7a4b" placeholder="Buscar" aria-label="Buscar en Excel" />
          </TitleSearch>
          <WindowControls>
            <Avatar>SL</Avatar>
            <BarButton $w={36} aria-label="Minimizar"><svg width="8" height="8" viewBox="0 0 8 8" {...line}><path d="M0 4h8" /></svg></BarButton>
            <BarButton $w={36} aria-label="Restaurar">
              <svg width="9" height="9" viewBox="0 0 9 9" {...line}><rect x=".5" y="2" width="6" height="6" rx="1" /><path d="M2.500.6H7q1.300 0 1.300 1.300v4.500" /></svg>
            </BarButton>
            <BarButton $w={36} aria-label="Cerrar"><svg width="8" height="8" viewBox="0 0 8 8" {...line}><path d="M.5.5l7 7M7.500.5l-7 7" /></svg></BarButton>
          </WindowControls>
        </TitleBar>

        <Ribbon>
          <RibbonTabs>
            {menu.map((m, i) => <RibbonTab key={m} $first={i === 0}>{m}</RibbonTab>)}
          </RibbonTabs>
          <RibbonActions>
            <ActionButton>
              <svg width="9" height="9" viewBox="0 0 9 9" fill="none" stroke="#444" strokeWidth=".9"><path d="M.6 1h7.800v5.300H4L2.200 8V6.300H.6z" /></svg>
              Comentarios
            </ActionButton>
            <ActionButton $primary>
              <svg width="9" height="9" viewBox="0 0 9 9" fill="none" stroke="#fff" strokeWidth=".9"><path d="M3 2.500H.8v6h6.700V6.500M2.500 6c.3-2 1.500-2.700 3-2.700V5l3-2.500L5.500.3v1.500" /></svg>
              Compartir
              <Chevron w={6} />
            </ActionButton>
          </RibbonActions>
        </Ribbon>

        <FormulaBar>
          <Box $w="276px">
            <NameInput defaultValue="A10" aria-label="Cuadro de nombres" />
            <Chevron />
          </Box>
          <MoreDots />
          <Box $w="64px">
            <svg width="10" height="10" viewBox="0 0 10 10" fill="none" stroke="#b3b3b3"><path d="M1 1l8 8M9 1L1 9" /></svg>
            <svg width="12" height="9" viewBox="0 0 12 9" fill="none" stroke="#b3b3b3"><path d="M.6 5l3 3L11.400.6" /></svg>
            <svg width="11" height="12" viewBox="0 0 11 12" fill="none" stroke="#222" strokeWidth="1.100"><path d="M6.500 1C5 .3 4.300 1.300 4 3L3 9.500C2.700 11 2 11.600.6 11.200M1.800 4.500h4M6 5q1.200-.5 1.800 1.600T10.300 9M10.300 5L6 9" /></svg>
            <Chevron w={6} />
          </Box>
          <Box>
            <FormulaInput
              defaultValue="'=SUMAR.SI(Rango,Criterio,RangoSuma) o SUMAR.SI.CONJUNTO(RangoSuma,Rango1,Criterio1,Rango2,Criterio2)"
              aria-label="Barra de fórmulas"
            />
            <Chevron />
          </Box>
        </FormulaBar>

        <SheetArea>
          <Sheet />
          <VScroll>
            <Triangle d="M4 .5L8 7H0z" />
            <Gap $n={86} />
            <Thumb $n={330} $vertical />
            <Gap $n={118} />
            <Triangle d="M4 7.500L8 1H0z" />
          </VScroll>
        </SheetArea>

        <TabBar>
          <PenBadge aria-label="Anotar"><PenIcon /></PenBadge>
          <NextSheets aria-label="Más hojas">
            <svg width="6" height="8" viewBox="0 0 6 8" fill="none" stroke="#999"><path d="M1.500.5l3.500 3.500L1.500 7.500" /></svg>
          </NextSheets>
          {sheets.map((s) => (
            <SheetTab key={s} $on={s === "Resumen"}><TabLabel $on={s === "Resumen"}>{s}</TabLabel></SheetTab>
          ))}
          <AddSheet aria-label="Hoja nueva"><svg width="9" height="9" viewBox="0 0 9 9" fill="none" stroke="#777"><path d="M4.500 0v9M0 4.500h9" /></svg></AddSheet>
          <Spacer />
          <MoreDots after={8} />
          <HScroll>
            <Triangle d="M.5 4L7 .5v7z" />
            <Gap $n={4} />
            <Thumb $n={179} />
            <Gap $n={20} />
            <Triangle d="M7.500 4L1 .5v7z" />
          </HScroll>
        </TabBar>

        <StatusBar>
          <Listo>Listo</Listo>
          <StatusButton aria-label="Grabar macro"><MacroIcon /></StatusButton>
          <StatusButton $strong><AccessIcon />Accesibilidad: es necesario investigar</StatusButton>
          <Spacer />
          <StatusButton><DisplayIcon />Configuración de visualización</StatusButton>
          <ViewButton $on aria-label="Normal">
            <svg width="11" height="11" viewBox="0 0 11 11" fill="none" stroke="#444"><path d="M.5.5h10v10H.5zM3.800.5v10M7.200.5v10M.5 3.800h10M.5 7.200h10" /></svg>
          </ViewButton>
          <ViewButton aria-label="Diseño de página">
            <svg width="11" height="11" viewBox="0 0 11 11" fill="none" stroke="#666"><path d="M.5.5h10v10H.5zM3 2.500h5v6H3zM4.500 4.500h2M4.500 6.500h2" /></svg>
          </ViewButton>
          <ViewButton aria-label="Salto de página">
            <svg width="11" height="11" viewBox="0 0 11 11" fill="none" stroke="#666"><path d="M.5.5h10v10H.5zM3.500.5v6h4v-6M.5 6.500h3" /></svg>
          </ViewButton>
          <ZoomButton aria-label="Alejar"><svg width="6" height="6" viewBox="0 0 6 6" {...line}><path d="M0 3.500h6" /></svg></ZoomButton>
          <ZoomRange type="range" min={0} max={100} defaultValue={63} aria-label="Zoom" />
          <ZoomButton aria-label="Acercar"><svg width="6" height="6" viewBox="0 0 6 6" {...line}><path d="M0 3.500h6M3 .5v6" /></svg></ZoomButton>
          <ZoomText>175%</ZoomText>
        </StatusBar>

        <TaskBar>
          <Weather>
            <WeatherIcon />
            <span>25°C<Faded>Mayorm. nublado</Faded></span>
          </Weather>
          <Apps>
            <AppButton aria-label="Inicio de Windows"><WindowsIcon /></AppButton>
            <TaskSearch>
              <Magnifier size={11} />
              <SearchInput $size={10} $tint="#666" placeholder="Buscar" aria-label="Buscar en Windows" />
            </TaskSearch>
            {apps.map((a) => (
              <AppButton key={a.name} aria-label={a.name} $open={a.open} $active={a.active}>{a.icon}</AppButton>
            ))}
          </Apps>
          <Tray>
            <TrayButton aria-label="Iconos ocultos"><Chevron w={9} up /></TrayButton>
            <TrayButton aria-label="Captura">
              <svg width="12" height="12" viewBox="0 0 12 12" fill="none"><rect x=".5" y="1" width="11" height="9" fill="#f4f4f4" stroke="#999" /><path d="M0 0h12v3H0z" fill="#2368c4" /><path d="M3 5h6v3.500H3z" stroke="#d0603c" /><path d="M8 8l3.500 3.500" stroke="#d0603c" /></svg>
            </TrayButton>
            <TrayButton aria-label="Nube">
              <svg width="13" height="12" viewBox="0 0 13 12" fill="none"><path d="M3 8.500a2.500 2.500 0 0 1 0-4.500C4 1.500 8.500 1 9.500 4.500" stroke="#555" strokeWidth="1.200" /><circle cx="8.700" cy="7.700" r="4" fill="#1a76d2" /><path d="M8.700 7v3M8.700 5.300v1" stroke="#fff" /></svg>
            </TrayButton>
            <TrayButton aria-label="Micrófono">
              <svg width="9" height="12" viewBox="0 0 9 12" fill="none" stroke="#4a6a8a"><rect x="2.800" y=".5" width="3.400" height="6.500" rx="1.700" fill="#6aa5e8" /><path d="M.6 5.500q0 3.500 3.900 3.500t3.900-3.500M4.500 9v3" /></svg>
            </TrayButton>
            <TrayButton $w={34}><span>ESP<br />LAA</span></TrayButton>
            <TrayButton $w={20} aria-label="Red">
              <svg width="12" height="12" viewBox="0 0 12 12" {...line}><path d="M8 1H.6v7.500h7.800V6.500M2.500 11h4.500M4.700 8.500V11M9 1.200h2.500v3.300H9zM10.200 4.500v6H8" /></svg>
            </TrayButton>
            <TrayButton $w={16} aria-label="Volumen">
              <svg width="13" height="10" viewBox="0 0 13 10" {...line}><path d="M.5 3.500h2L5.500.8v8.400L2.500 6.500h-2zM7.500 3.300q1.200 1.700 0 3.400M9.300 1.900q2.200 3.100 0 6.200M11 .6q3 4.400 0 8.800" /></svg>
            </TrayButton>
            <Clock>21:43<br />20/02/2026</Clock>
          </Tray>
        </TaskBar>
      </Window>
    </>
  );
}
